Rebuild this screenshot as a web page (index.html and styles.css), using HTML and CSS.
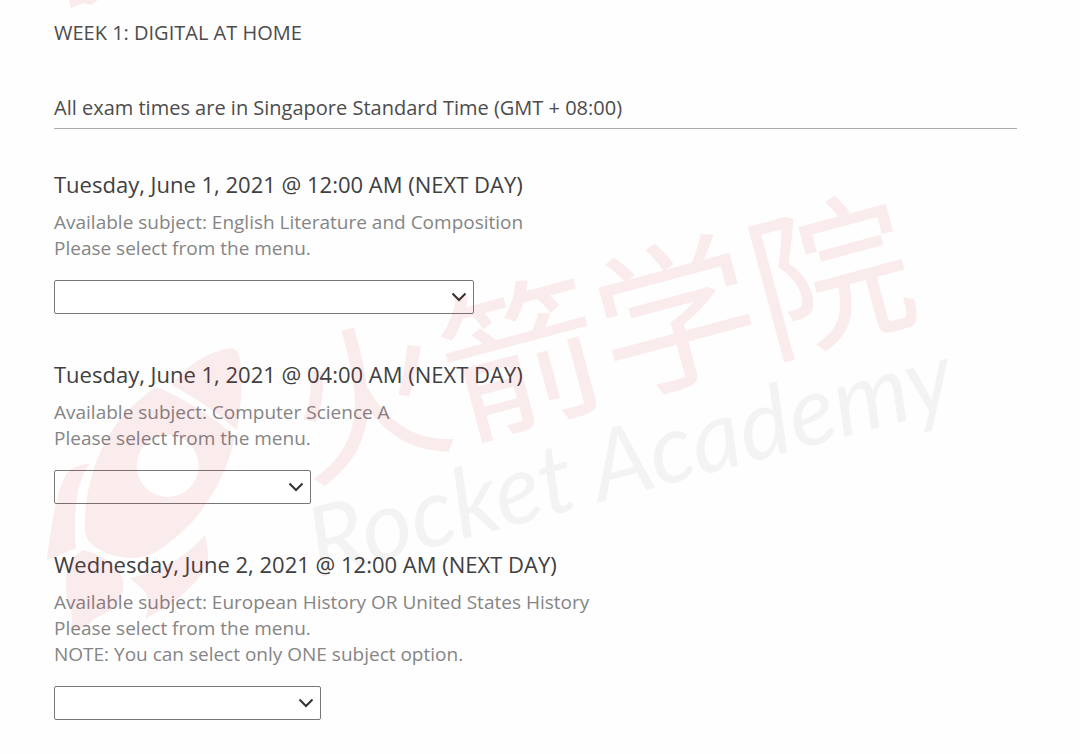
FILE: index.html
```
<!DOCTYPE html>
<html lang="en">
<head>
    <meta charset="UTF-8">
    <meta name="viewport" content="width=device-width, initial-scale=1.0">
    <title>Exam Schedule</title>
    <link rel="stylesheet" href="styles.css">
</head>
<body>
    <main class="schedule">
        <h1 class="week">WEEK 1: DIGITAL AT HOME</h1>
        <p class="timezone">All exam times are in Singapore Standard Time (GMT + 08:00)</p>

        <section class="exam">
            <h2><label for="exam-1">Tuesday, June 1, 2021 @ 12:00 AM (NEXT DAY)</label></h2>
            <p>Available subject: English Literature and Composition<br>
                Please select from the menu.</p>
            <div class="dropdown dropdown-wide">
                <select id="exam-1">
                    <option value=""></option>
                    <option>English Literature and Composition</option>
                </select>
                <svg class="chevron" viewBox="0 0 16 10"><path d="M1.5 1.5L8 8l6.5-6.5"/></svg>
            </div>
        </section>

        <section class="exam">
            <h2><label for="exam-2">Tuesday, June 1, 2021 @ 04:00 AM (NEXT DAY)</label></h2>
            <p>Available subject: Computer Science A<br>
                Please select from the menu.</p>
            <div class="dropdown dropdown-small">
                <select id="exam-2">
                    <option value=""></option>
                    <option>Computer Science A</option>
                </select>
                <svg class="chevron" viewBox="0 0 16 10"><path d="M1.5 1.5L8 8l6.5-6.5"/></svg>
            </div>
        </section>

        <section class="exam">
            <h2><label for="exam-3">Wednesday, June 2, 2021 @ 12:00 AM (NEXT DAY)</label></h2>
            <p>Available subject: European History OR United States History<br>
                Please select from the menu.<br>
                NOTE: You can select only ONE subject option.</p>
            <div class="dropdown dropdown-medium">
                <select id="exam-3">
                    <option value=""></option>
                    <option>European History</option>
                    <option>United States History</option>
                </select>
                <svg class="chevron" viewBox="0 0 16 10"><path d="M1.5 1.5L8 8l6.5-6.5"/></svg>
            </div>
        </section>
    </main>

    <svg class="watermark" viewBox="0 0 1000 700">
        <path class="red" d="M69 0L71 8L84 3L91 5L98 0Z"/>
        <!-- rocket -->
        <g class="red" transform="translate(20 330) scale(.3333)">
            <path d="M455 165C510 95 580 60 635 55Q655 58 660 85C668 160 665 230 650 300Q560 220 455 165Z"/>
            <path fill-rule="evenodd" d="M420 175Q550 235 645 318C620 440 550 570 430 650C380 690 310 695 240 660Q195 635 195 600C190 440 260 280 370 200Q400 170 420 175ZM350 408a93 93 0 1 0 186 0a93 93 0 1 0-186 0Z"/>
            <path d="M210 400C165 460 160 560 168 655L80 690C95 580 110 480 140 430Q165 405 210 400Z"/>
            <path d="M330 745C430 720 500 680 555 615Q570 680 560 710C510 790 430 840 375 865Q400 800 360 770Z"/>
            <path d="M190 660Q300 690 310 760C310 830 260 850 225 865C190 900 170 905 150 895Q165 860 140 800C135 720 140 690 190 660Z"/>
        </g>
        <text class="red name-cn" transform="translate(305 478) rotate(-15)">火箭学院</text>
        <text class="name-en" transform="translate(318 578) rotate(-15)">Rocket Academy</text>
    </svg>
</body>
</html>
```
FILE: styles.css
```
* {
    box-sizing: border-box;
}
body {
    position: relative;
    margin: 0;
    font-family: "Open Sans", sans-serif;
    background-color: #fefefe;
    color: #4c4c4c;
}
h1, h2, p {
    margin: 0;
    font-weight: 400;
}
.schedule {
    padding: 20px 63px 34px 54px;
}
.week {
    font-size: 20px;
    line-height: 26px;
}
.timezone {
    margin-top: 48px;
    padding-bottom: 6px;
    font-size: 20px;
    line-height: 28px;
    border-bottom: 1px solid #aaa;
}
.exam {
    margin-top: 45px;
}
.timezone + .exam {
    margin-top: 40px;
}
.exam h2 {
    font-size: 22px;
    line-height: 30px;
    color: #404040;
}
.exam p {
    margin: 10px 0 19px;
    font-size: 19px;
    line-height: 26px;
    color: #858585;
}
.dropdown {
    position: relative;
    max-width: 100%;
}
.dropdown-wide {
    width: 420px;
}
.dropdown-medium {
    width: 267px;
}
.dropdown-small {
    width: 257px;
}
.dropdown select {
    display: block;
    width: 100%;
    height: 34px;
    padding: 0 32px 0 8px;
    appearance: none;
    background-color: #fff;
    border: 1px solid #777;
    border-radius: 2px;
    font-family: inherit;
    font-size: 19px;
    color: #333;
}
.chevron {
    position: absolute;
    top: 12px;
    right: 7px;
    width: 16px;
    height: 10px;
    fill: none;
    stroke: #333;
    stroke-width: 2;
    pointer-events: none;
}
.watermark {
    position: absolute;
    top: 0;
    left: 0;
    width: 1000px;
    height: 700px;
    pointer-events: none;
}
.red {
    fill: #d01020;
    fill-opacity: 0.08;
}
.name-cn {
    font-family: "Noto Sans CJK SC", sans-serif;
    font-size: 160px;
}
.name-en {
    font-family: Lato, sans-serif;
    font-style: italic;
    font-size: 97px;
    fill: #000;
    fill-opacity: 0.045;
}
```
